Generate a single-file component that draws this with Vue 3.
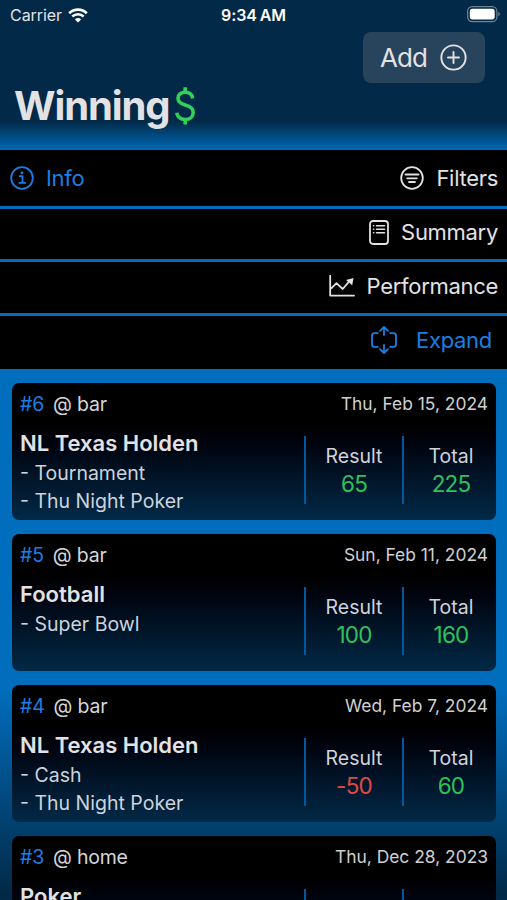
<template>
  <div class="screen">
    <header class="header">
      <div class="status-bar">
        <div class="carrier">
          <span>Carrier</span>
          <svg class="wifi" viewBox="0 0 20 15">
            <path d="M1.2 5.2a12.6 12.6 0 0 1 17.6 0" />
            <path d="M4.3 8.5a8.2 8.2 0 0 1 11.4 0" />
            <path class="wifi-dot" d="M10 14.6 6.9 11.4a4.5 4.5 0 0 1 6.2 0z" />
          </svg>
        </div>
        <span class="clock">9:34 AM</span>
        <div class="battery-wrap">
          <svg class="battery" viewBox="0 0 34 17">
            <rect x="0.6" y="0.6" width="29.3" height="15" rx="4.6" class="battery-frame" />
            <rect x="2.8" y="2.8" width="24.9" height="10.6" rx="2.6" class="battery-level" />
            <path d="M31.3 5.8q1.6 .8 1.6 2.3t-1.6 2.3z" class="battery-tip" />
          </svg>
        </div>
      </div>

      <div class="toolbar">
        <button class="add-btn" type="button">
          <span>Add</span>
          <svg class="add-icon" viewBox="0 0 28 28">
            <circle cx="14" cy="14" r="12.6" />
            <path d="M14 8.3v11.4M8.3 14h11.4" />
          </svg>
        </button>
      </div>

      <h1 class="title">
        <span>Winning</span>
        <svg class="dollar" viewBox="0 0 20 40">
          <path d="M10.200 1.300v4.500M10.200 34v4.500" />
          <path d="M17.700 12.400C17.200 8.600 14.400 6.200 10.200 6.200 5.900 6.200 3 8.700 3 12.300c0 4 2.900 5.600 7.200 6.700 4.800 1.200 8 3 8 7.200 0 4.500-3.300 7.300-8 7.300-4.900 0-8-2.700-8.400-6.700" />
        </svg>
      </h1>
    </header>

    <nav class="menu">
      <div class="menu-row first">
        <a class="menu-link accent">
          <svg class="icon info-icon" viewBox="0 0 24 24">
            <circle cx="12" cy="12" r="10.800" />
            <path d="M9.800 10.200h2.700v6.600M9.300 16.900h6" />
            <circle cx="12" cy="6.900" r="1.400" class="dot" />
          </svg>
          <span>Info</span>
        </a>
        <a class="menu-link">
          <svg class="icon filter-icon" viewBox="0 0 24 24">
            <circle cx="12" cy="12" r="10.800" />
            <path d="M5.500 8.500h13M7.200 12.300h9.600M9 16h6" />
          </svg>
          <span>Filters</span>
        </a>
      </div>
      <div class="menu-row">
        <a class="menu-link">
          <svg class="icon summary-icon" viewBox="0 0 20 25">
            <rect x="1" y="1" width="18" height="23" rx="3" />
            <path d="M7.500 5.700h8M7.500 9.200h8M7.500 12.700h8M4.500 5.700h.3M4.500 9.200h.3M4.500 12.700h.3" class="lines" />
          </svg>
          <span>Summary</span>
        </a>
      </div>
      <div class="menu-row">
        <a class="menu-link">
          <svg class="icon chart-icon" viewBox="0 0 26 22">
            <path d="M1.200.800v19.800H25" />
            <path d="M2.500 13.200 7.500 8.200l6.200 5.800 6.500-7.600" class="trend" />
            <path d="M24.600 2.900 23.200 10.200 17 4.900z" class="dot" />
          </svg>
          <span>Performance</span>
        </a>
      </div>
      <div class="menu-row last">
        <a class="menu-link accent">
          <svg class="icon expand-icon" viewBox="0 0 28 28">
            <path d="M7.800 7.200H4.600Q2 7.200 2 9.800v8.400q0 2.600 2.600 2.600h3.200M20.200 7.200h3.200q2.600 0 2.600 2.600v8.400q0 2.600-2.600 2.600h-3.200" />
            <path d="M14 9V1.200M10 4.900 14 1l4 3.900M14 19v7.800M10 23.100 14 27l4-3.900" />
          </svg>
          <span>Expand</span>
        </a>
      </div>
    </nav>

    <main class="games">
      <article v-for="game in games" :key="game.id" class="card">
        <div class="card-top">
          <div class="place">
            <span class="number">#{{ game.id }}</span>
            <span>@ {{ game.place }}</span>
          </div>
          <span class="date">{{ game.date }}</span>
        </div>
        <div class="card-body">
          <div class="details">
            <h2 class="name">{{ game.name }}</h2>
            <p v-for="note in game.notes" :key="note" class="note">- {{ note }}</p>
          </div>
          <div v-for="stat in game.stats" :key="stat.label" class="stat">
            <template v-if="stat.amount !== undefined">
              <span class="label">{{ stat.label }}</span>
              <span class="amount" :class="{ loss: stat.amount < 0 }">{{ stat.amount }}</span>
            </template>
          </div>
        </div>
      </article>
    </main>
  </div>
</template>

<script setup>
import { ref } from 'vue'

function stats(result, total) {
  return [
    { label: 'Result', amount: result },
    { label: 'Total', amount: total }
  ]
}

const games = ref([
  { id: 6, place: 'bar', date: 'Thu, Feb 15, 2024', name: 'NL Texas Holden', notes: ['Tournament', 'Thu Night Poker'], stats: stats(65, 225) },
  { id: 5, place: 'bar', date: 'Sun, Feb 11, 2024', name: 'Football', notes: ['Super Bowl'], stats: stats(100, 160) },
  { id: 4, place: 'bar', date: 'Wed, Feb 7, 2024', name: 'NL Texas Holden', notes: ['Cash', 'Thu Night Poker'], stats: stats(-50, 60) },
  { id: 3, place: 'home', date: 'Thu, Dec 28, 2023', name: 'Poker', notes: [], stats: stats() }
])
</script>

<style>
body {
  margin: 0;
  background: #022947;
}
</style>

<style scoped>
.screen {
  width: 507px;
  height: 900px;
  overflow: hidden;
  display: flex;
  flex-direction: column;
  font-family: Inter, "Liberation Sans", sans-serif;
  color: #e2e2e4;
  background: linear-gradient(to bottom, #006dbd 0, #006dbd 690px, #022947 895px);
}

.header {
  height: 150px;
  flex-shrink: 0;
  background: linear-gradient(to bottom, #022947 0, #022947 121px, #0069b6 150px);
}

.status-bar {
  height: 30px;
  display: grid;
  grid-template-columns: 1fr auto 1fr;
  align-items: center;
  padding: 0 8px 0 10px;
  box-sizing: border-box;
  font-size: 16px;
}

.carrier {
  display: flex;
  align-items: center;
  gap: 6px;
  letter-spacing: -0.05px;
}

.wifi {
  width: 20px;
  height: 15px;
  fill: none;
  stroke: #fff;
  stroke-width: 2.6;
}

.wifi-dot {
  fill: #fff;
  stroke: none;
}

.clock {
  margin-right: 2px;
  color: #fff;
  font-weight: 600;
  letter-spacing: -0.1px;
  word-spacing: -1px;
}

.battery-wrap {
  display: flex;
  justify-content: flex-end;
}

.battery {
  width: 34px;
  height: 17px;
  position: relative;
  left: 2px;
  top: -1px;
}

.battery-frame {
  fill: none;
  stroke: #6d8293;
  stroke-width: 1.2;
}

.battery-level {
  fill: #fff;
}

.battery-tip {
  fill: #6d8293;
}

.toolbar {
  display: flex;
  justify-content: flex-end;
  padding: 2px 22px 0 0;
}

.add-btn {
  width: 122px;
  height: 51px;
  display: flex;
  align-items: center;
  justify-content: space-between;
  padding: 0 18px 0 17px;
  border: none;
  border-radius: 8px;
  background: #28435c;
  color: inherit;
  font-family: inherit;
  font-size: 26px;
  letter-spacing: -0.9px;
}

.add-icon {
  width: 27px;
  height: 27px;
  fill: none;
  stroke: #e2e2e4;
  stroke-width: 2;
  stroke-linecap: round;
}

.title {
  display: flex;
  align-items: center;
  gap: 6px;
  height: 46px;
  margin: 0;
  padding-left: 14px;
  font-size: 40px;
  font-weight: 700;
  letter-spacing: -1.1px;
}

.title span {
  margin-top: -2px;
}

.dollar {
  width: 20px;
  height: 40px;
  fill: none;
  stroke: #30d158;
  stroke-width: 3.6;
  stroke-linecap: butt;
}

.menu {
  flex-shrink: 0;
}

.menu-row {
  height: 50px;
  display: flex;
  align-items: center;
  justify-content: flex-end;
  padding: 0 9px 4px 10px;
  margin-bottom: 3px;
  box-sizing: border-box;
  background: #000;
}

.menu-row:nth-child(3) {
  height: 51px;
}

.menu-row.first {
  height: 56px;
  padding-bottom: 0;
  justify-content: space-between;
}

.menu-row.last {
  height: 53px;
  padding: 0 15px 5px 10px;
  margin-bottom: 0;
}

.menu-link {
  display: flex;
  align-items: center;
  gap: 12px;
  font-size: 22px;
  letter-spacing: -0.3px;
}

.accent {
  color: #1a7fe5;
}

.icon {
  fill: none;
  stroke: currentColor;
  stroke-width: 1.8;
  stroke-linecap: round;
  stroke-linejoin: round;
}

.dot {
  fill: currentColor;
  stroke: none;
}

.info-icon,
.filter-icon {
  width: 24px;
  height: 24px;
}

.summary-icon {
  width: 20px;
  height: 25px;
}

.lines {
  stroke-width: 1.5;
}

.chart-icon {
  width: 26px;
  height: 22px;
}

.expand-icon {
  width: 28px;
  height: 28px;
  margin-right: 6px;
}

.games {
  display: flex;
  flex-direction: column;
  gap: 14px;
  padding: 14px 11px 0 12px;
}

.card {
  height: 137px;
  flex-shrink: 0;
  box-sizing: border-box;
  padding: 8px 8px 0;
  border-radius: 7px;
  background: linear-gradient(to bottom, #000 0, #000 30%, #00040f 45%, #022947 100%);
}

.card-top {
  height: 26px;
  display: flex;
  align-items: center;
  justify-content: space-between;
}

.place {
  display: flex;
  gap: 9px;
  font-size: 19.5px;
  letter-spacing: -0.2px;
  color: #d6d6d8;
}

.number {
  color: #1a7fe5;
}

.date {
  margin-top: -2px;
  font-size: 17.4px;
  color: #d0d0d2;
}

.card-body {
  display: flex;
  margin-top: 12px;
  margin-right: -10px;
}

.details {
  flex: 1;
}

.name {
  margin: 0 0 2px;
  font-size: 22px;
  line-height: 28px;
  font-weight: 600;
}

.note {
  margin: 0;
  font-size: 19.5px;
  line-height: 28px;
  color: #ccd3dc;
}

.stat {
  width: 96px;
  height: 68px;
  margin-top: 7px;
  display: flex;
  flex-direction: column;
  align-items: center;
  justify-content: center;
  border-left: 2px solid #0059a0;
}

.stat:last-child {
  width: 94px;
}

.label {
  font-size: 19.5px;
  line-height: 28px;
  color: #d0d3dc;
}

.amount {
  font-size: 22.5px;
  line-height: 28px;
  letter-spacing: -0.8px;
  color: #2fc25b;
}

.amount.loss {
  color: #e04a45;
}
</style>
